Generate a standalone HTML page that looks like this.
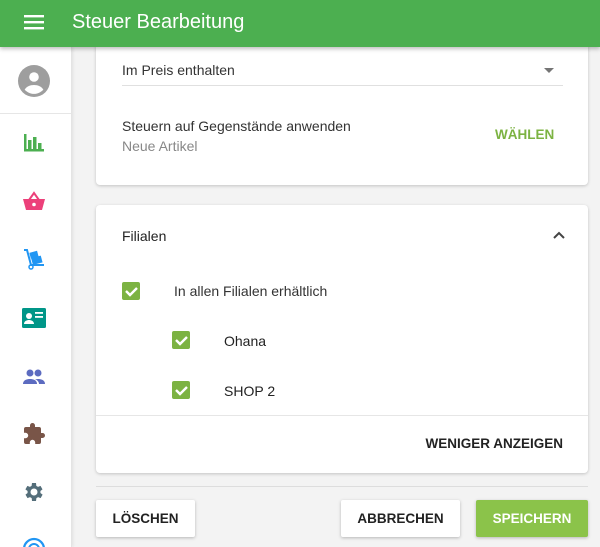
<!DOCTYPE html>
<html><head><meta charset="utf-8"><style>
*{box-sizing:border-box;margin:0;padding:0}
html{overflow:hidden;width:600px;height:547px}
body{width:600px;height:547px;overflow:hidden;background:#f3f3f3;font-family:"Liberation Sans",Roboto,sans-serif;position:relative;color:#222}
.top{position:absolute;left:0;top:0;width:600px;height:47px;background:#4caf50;box-shadow:0 2px 4px rgba(0,0,0,.25);z-index:5}
.top .t{position:absolute;left:72px;top:11px;color:#fff;font-size:20px}
.side{position:absolute;left:0;top:47px;width:72px;height:500px;background:#fff;border-right:1px solid #e4e4e4;box-shadow:1px 0 3px rgba(0,0,0,.08);overflow:hidden}
.ic{position:absolute;left:22px;width:24px;height:24px}
.card{position:absolute;left:96px;width:492px;background:#fff;border-radius:4px;box-shadow:0 1px 3px rgba(0,0,0,.2)}
.a{position:absolute;font-size:14px}
.cb{position:absolute;width:18px;height:18px;background:#7cb342;border-radius:2px}
.btn{position:absolute;top:500px;height:37px;border-radius:2px;font-size:13.5px;font-weight:bold;text-align:center;line-height:37px;box-shadow:0 1px 3px rgba(0,0,0,.25);background:#fff;color:#222}
</style></head><body>
<div class="top">
<svg style="position:absolute;left:24px;top:14px" width="20" height="16"><rect y="1" width="20" height="2.4" fill="#fff"/><rect y="7" width="20" height="2.4" fill="#fff"/><rect y="13" width="20" height="2.4" fill="#fff"/></svg>
<div class="t">Steuer Bearbeitung</div></div>
<div class="card" style="top:30px;height:155px">
<div class="a" style="left:26px;top:32px;color:#333">Im Preis enthalten</div>
<svg style="position:absolute;left:448px;top:38px" width="10" height="5"><path d="M0 0h10L5 5z" fill="#757575"/></svg>
<div style="position:absolute;left:26px;top:55px;width:441px;height:1px;background:#e0e0e0"></div>
<div class="a" style="left:26px;top:88px;color:#333">Steuern auf Gegenstände anwenden</div>
<div class="a" style="left:26px;top:108px;color:#888">Neue Artikel</div>
<div class="a" style="left:399px;top:97px;color:#7cb342;font-weight:bold;font-size:13.5px">WÄHLEN</div>
</div>
<div class="card" style="top:205px;height:268px">
<div class="a" style="left:26px;top:23px">Filialen</div>
<svg style="position:absolute;left:457px;top:26px" width="12" height="8"><path d="M1 7l5-5 5 5" stroke="#444" stroke-width="2" fill="none"/></svg>
<div class="cb" style="left:26px;top:77px"></div>
<div class="a" style="left:78px;top:78px;color:#333">In allen Filialen erhältlich</div>
<div class="cb" style="left:76px;top:126px"></div>
<div class="a" style="left:128px;top:128px">Ohana</div>
<div class="cb" style="left:76px;top:176px"></div>
<div class="a" style="left:128px;top:178px">SHOP 2</div>
<div style="position:absolute;left:0;top:210px;width:492px;height:1px;background:#e6e6e6"></div>
<div class="a" style="right:25px;top:231px;font-weight:bold;color:#222;font-size:13.5px">WENIGER ANZEIGEN</div>
</div>
<svg style="position:absolute;left:0;top:0" width="600" height="547">
<g fill="none" stroke="#fff" stroke-width="2.4"><path d="M126 291l4 4 7-7"/><path d="M176 340l4 4 7-7"/><path d="M176 390l4 4 7-7"/></g>
</svg>
<div style="position:absolute;left:96px;top:486px;width:492px;height:1px;background:#ddd"></div>
<div class="btn" style="left:96px;width:99px">LÖSCHEN</div>
<div class="btn" style="left:341px;width:119px">ABBRECHEN</div>
<div class="btn" style="left:476px;width:112px;background:#8bc34a;color:#fff">SPEICHERN</div>
<div class="side">
<svg style="position:absolute;left:18px;top:18px" width="32" height="32" viewBox="0 0 24 24"><circle cx="12" cy="12" r="12" fill="#9e9e9e"/><circle cx="12" cy="9" r="3.6" fill="#fff"/><path d="M5 18.5c1.5-2.5 4-3.5 7-3.5s5.5 1 7 3.5c-1.8 2-4.3 3.2-7 3.2s-5.2-1.2-7-3.2z" fill="#fff"/></svg>
<div style="position:absolute;left:0;top:66px;width:72px;height:1px;background:#e6e6e6"></div>
<svg class="ic" style="top:84px" viewBox="0 0 24 24" fill="#4caf50"><rect x="2" y="3" width="2.5" height="17"/><rect x="2" y="18" width="20" height="2.5"/><rect x="6" y="9" width="3.5" height="10"/><rect x="11" y="6" width="3.5" height="13"/><rect x="16" y="12" width="3.5" height="7"/></svg>
<svg class="ic" style="top:143px" viewBox="0 0 24 24" fill="#ec407a"><path d="M12 3l-5 7h10z" fill="none" stroke="#ec407a" stroke-width="2"/><path d="M1 9h22l-3 11H4z"/><circle cx="12" cy="14.5" r="1.8" fill="#fff"/></svg>
<svg class="ic" style="top:200px" viewBox="0 0 24 24" fill="#2196f3"><path d="M2 3h3l4 15h13" fill="none" stroke="#2196f3" stroke-width="2"/><rect x="8" y="5" width="8" height="6" transform="rotate(-15 11 8)"/><rect x="10" y="10" width="10" height="7" transform="rotate(-15 14 14)"/><circle cx="9" cy="20" r="2" fill="none" stroke="#2196f3" stroke-width="1.5"/></svg>
<svg class="ic" style="top:259px" viewBox="0 0 24 24"><rect x="0" y="2" width="24" height="20" rx="1.5" fill="#009688"/><circle cx="7" cy="10" r="3" fill="#fff"/><path d="M2 18c0-3 3-4 5-4s5 1 5 4z" fill="#fff"/><rect x="13" y="6" width="8" height="1.8" fill="#fff"/><rect x="13" y="10" width="8" height="1.8" fill="#fff"/></svg>
<svg class="ic" style="top:318px" viewBox="0 0 24 24" fill="#5c6bc0"><circle cx="8" cy="8" r="3.5"/><circle cx="16" cy="8" r="3.5"/><path d="M1 19c0-4 4-5 7-5s7 1 7 5z"/><path d="M13 14.3c1-.2 2-.3 3-.3 3 0 7 1 7 5h-6c0-2-1.5-3.7-4-4.7z"/></svg>
<svg class="ic" style="top:375px" viewBox="0 0 24 24" fill="#795548"><path d="M20.5 11H19V7a2 2 0 0 0-2-2h-4V3.5a2.5 2.5 0 0 0-5 0V5H4a2 2 0 0 0-2 2v3.8h1.5a2.7 2.7 0 0 1 0 5.4H2V20a2 2 0 0 0 2 2h3.8v-1.5a2.7 2.7 0 0 1 5.4 0V22H17a2 2 0 0 0 2-2v-4h1.5a2.5 2.5 0 0 0 0-5z"/></svg>
<svg class="ic" style="top:433px" viewBox="0 0 24 24" fill="#546e7a"><path d="M19.4 13a7.5 7.5 0 0 0 0-2l2.1-1.6-2-3.5-2.5 1a7 7 0 0 0-1.7-1L15 3h-4l-.4 2.9a7 7 0 0 0-1.7 1l-2.5-1-2 3.5L6.6 11a7.5 7.5 0 0 0 0 2l-2.1 1.6 2 3.5 2.5-1a7 7 0 0 0 1.7 1L11 21h4l.4-2.9a7 7 0 0 0 1.7-1l2.5 1 2-3.5zM13 15.5a3.5 3.5 0 1 1 0-7 3.5 3.5 0 0 1 0 7z" transform="translate(-1 0)"/></svg>
<svg class="ic" style="top:490px" viewBox="0 0 24 24"><circle cx="12" cy="12" r="10" fill="none" stroke="#2196f3" stroke-width="2.2"/><circle cx="12" cy="12" r="5" fill="none" stroke="#2196f3" stroke-width="2"/></svg>
</div>
</body></html>
